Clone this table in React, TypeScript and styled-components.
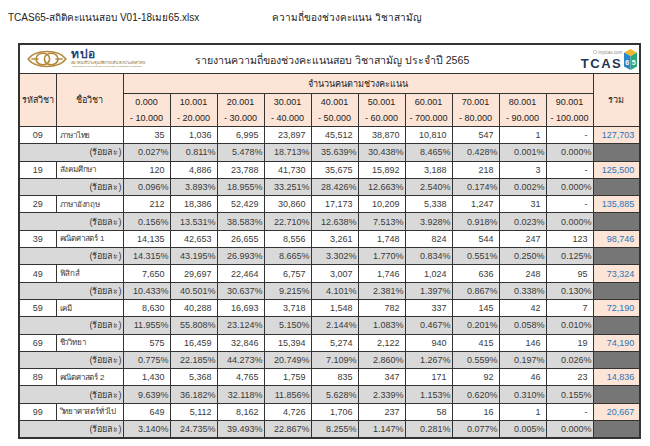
import React from "react";
import styled, { createGlobalStyle } from "styled-components";

type Subject = {
  code: string;
  name: string;
  counts: string[];
  total: string;
  pct: string[];
};

const ranges = [
  ["0.000", "- 10.000"],
  ["10.001", "- 20.000"],
  ["20.001", "- 30.000"],
  ["30.001", "- 40.000"],
  ["40.001", "- 50.000"],
  ["50.001", "- 60.000"],
  ["60.001", "- 700.000"],
  ["70.001", "- 80.000"],
  ["80.001", "- 90.000"],
  ["90.001", "- 100.000"],
];

const subjects: Subject[] = [
  {
    code: "09",
    name: "ภาษาไทย",
    counts: ["35", "1,036", "6,995", "23,897", "45,512", "38,870", "10,810", "547", "1", "-"],
    total: "127,703",
    pct: ["0.027%", "0.811%", "5.478%", "18.713%", "35.639%", "30.438%", "8.465%", "0.428%", "0.001%", "0.000%"],
  },
  {
    code: "19",
    name: "สังคมศึกษา",
    counts: ["120", "4,886", "23,788", "41,730", "35,675", "15,892", "3,188", "218", "3", "-"],
    total: "125,500",
    pct: ["0.096%", "3.893%", "18.955%", "33.251%", "28.426%", "12.663%", "2.540%", "0.174%", "0.002%", "0.000%"],
  },
  {
    code: "29",
    name: "ภาษาอังกฤษ",
    counts: ["212", "18,386", "52,429", "30,860", "17,173", "10,209", "5,338", "1,247", "31", "-"],
    total: "135,885",
    pct: ["0.156%", "13.531%", "38.583%", "22.710%", "12.638%", "7.513%", "3.928%", "0.918%", "0.023%", "0.000%"],
  },
  {
    code: "39",
    name: "คณิตศาสตร์ 1",
    counts: ["14,135", "42,653", "26,655", "8,556", "3,261", "1,748", "824", "544", "247", "123"],
    total: "98,746",
    pct: ["14.315%", "43.195%", "26.993%", "8.665%", "3.302%", "1.770%", "0.834%", "0.551%", "0.250%", "0.125%"],
  },
  {
    code: "49",
    name: "ฟิสิกส์",
    counts: ["7,650", "29,697", "22,464", "6,757", "3,007", "1,746", "1,024", "636", "248", "95"],
    total: "73,324",
    pct: ["10.433%", "40.501%", "30.637%", "9.215%", "4.101%", "2.381%", "1.397%", "0.867%", "0.338%", "0.130%"],
  },
  {
    code: "59",
    name: "เคมี",
    counts: ["8,630", "40,288", "16,693", "3,718", "1,548", "782", "337", "145", "42", "7"],
    total: "72,190",
    pct: ["11.955%", "55.808%", "23.124%", "5.150%", "2.144%", "1.083%", "0.467%", "0.201%", "0.058%", "0.010%"],
  },
  {
    code: "69",
    name: "ชีววิทยา",
    counts: ["575", "16,459", "32,846", "15,394", "5,274", "2,122", "940", "415", "146", "19"],
    total: "74,190",
    pct: ["0.775%", "22.185%", "44.273%", "20.749%", "7.109%", "2.860%", "1.267%", "0.559%", "0.197%", "0.026%"],
  },
  {
    code: "89",
    name: "คณิตศาสตร์ 2",
    counts: ["1,430", "5,368", "4,765", "1,759", "835", "347", "171", "92", "46", "23"],
    total: "14,836",
    pct: ["9.639%", "36.182%", "32.118%", "11.856%", "5.628%", "2.339%", "1.153%", "0.620%", "0.310%", "0.155%"],
  },
  {
    code: "99",
    name: "วิทยาศาสตร์ทั่วไป",
    counts: ["649", "5,112", "8,162", "4,726", "1,706", "237", "58", "16", "1", "-"],
    total: "20,667",
    pct: ["3.140%", "24.735%", "39.493%", "22.867%", "8.255%", "1.147%", "0.281%", "0.077%", "0.005%", "0.000%"],
  },
];

const GlobalStyle = createGlobalStyle`
  body {
    margin: 0;
    background: #fff;
    font-family: "Liberation Sans", "Noto Sans", sans-serif;
    color: #333;
  }
`;

const Page = styled.div`
  width: 650px;
  height: 446px;
  overflow: hidden;
  padding-top: 12px;
  box-sizing: border-box;
`;

const TopBar = styled.div`
  display: grid;
  grid-template-columns: 264px 1fr;
  padding-left: 8px;
  font-size: 10px;
  line-height: 12px;
  color: #222;
`;

const Sheet = styled.table`
  margin: 19px 0 0 18px;
  width: 621px;
  border-collapse: collapse;
  table-layout: fixed;
  border: 2px solid #333;
  font-size: 9px;

  td,
  th {
    border: 1px solid #333;
    padding: 0;
    white-space: nowrap;
    overflow: hidden;
  }
`;

const TitleCell = styled.td`
  height: 28px;
  background: #fff;
`;

const TitleBar = styled.div`
  display: grid;
  grid-template-columns: 1fr auto 1fr;
  align-items: center;
  padding: 0 2px 0 7px;
`;

const Title = styled.div`
  font-size: 10.6px;
  color: #2a2a2a;
  padding-top: 2px;
`;

const Cupt = styled.div`
  display: flex;
  align-items: flex-start;
  gap: 4px;
`;

const CuptText = styled.div`
  display: flex;
  flex-direction: column;
  line-height: 1;
`;

const CuptMark = styled.span`
  font-size: 12px;
  font-weight: 700;
  color: #1d3f7a;
  letter-spacing: 0.5px;
`;

const CuptThai = styled.span`
  font-size: 4px;
  color: #8a6a2c;
  margin-top: 1px;
`;

const CuptEng = styled.span`
  font-size: 2.5px;
  color: #8a6a2c;
  margin-top: 1px;
`;

const Tcas = styled.div`
  justify-self: end;
  display: flex;
  align-items: flex-end;
  gap: 2px;
`;

const TcasText = styled.div`
  display: flex;
  flex-direction: column;
  align-items: flex-end;
  line-height: 1;
`;

const TcasSite = styled.span`
  font-size: 4.5px;
  color: #8a8a8a;
  margin-bottom: 1px;
`;

const TcasWord = styled.span`
  font-size: 13px;
  font-weight: 700;
  color: #1f3556;
  letter-spacing: 1.5px;
`;

const HeadCell = styled.th`
  background: #fce4d6;
  font-weight: 400;
  color: #222;
  text-align: center;
  vertical-align: middle;
`;

const GroupHead = styled(HeadCell)`
  height: 19px;
`;

const RangeHead = styled(HeadCell)`
  height: 31px;
  line-height: 16px;
`;

const DataRow = styled.tr<{ $pct?: boolean }>`
  height: 17.3px;
  background: ${(p) => (p.$pct ? "#d9d9d9" : "#fff")};
  color: #3a3a3a;
`;

const CodeCell = styled.td`
  text-align: center;
`;

const NameCell = styled.td`
  text-align: left;
  padding-left: 3px !important;
  font-size: 8px;
  letter-spacing: -0.2px;
`;

const NumCell = styled.td<{ $pct?: boolean }>`
  text-align: right;
  padding-right: ${(p) => (p.$pct ? "1px" : "5px")} !important;
`;

const TotalCell = styled.td<{ $pct?: boolean }>`
  text-align: right;
  padding-right: 5px !important;
  background: ${(p) => (p.$pct ? "#767676" : "#fce4d6")};
  color: #2e75b6;
`;

const Emblem = () => (
  <svg width="40" height="22" viewBox="0 0 38 21">
    <g fill="none" stroke="#b68a3e" strokeWidth="1.6">
      <path d="M1 10.5 C8 1 30 1 37 10.5 C30 20 8 20 1 10.5 Z" />
      <ellipse cx="15" cy="10.5" rx="6.5" ry="5.5" />
      <ellipse cx="23" cy="10.5" rx="6.5" ry="5.5" />
      <path d="M4 10.5 H11 M27 10.5 H34" />
    </g>
  </svg>
);

const Cube = () => (
  <svg width="13" height="21" viewBox="0 0 13 21">
    <polygon points="6.5,0 13,3.5 6.5,7 0,3.5" fill="#f2b632" />
    <polygon points="0,3.5 6.5,7 6.5,21 0,17.5" fill="#2a86c8" />
    <polygon points="6.5,7 13,3.5 13,17.5 6.5,21" fill="#2fa67a" />
    <text x="3.2" y="15.5" fontSize="7" fontWeight="700" fill="#fff" textAnchor="middle" fontFamily="Liberation Sans, sans-serif">
      6
    </text>
    <text x="9.8" y="15.5" fontSize="7" fontWeight="700" fill="#fff" textAnchor="middle" fontFamily="Liberation Sans, sans-serif">
      5
    </text>
  </svg>
);

const Globe = () => (
  <svg width="4" height="4" viewBox="0 0 4 4" style={{ marginRight: 1 }}>
    <circle cx="2" cy="2" r="1.7" fill="none" stroke="#999" strokeWidth="0.5" />
  </svg>
);

export default function App() {
  return (
    <Page>
      <GlobalStyle />
      <TopBar>
        <span>TCAS65-สถิติคะแนนสอบ V01-18เมย65.xlsx</span>
        <span>ความถี่ของช่วงคะแนน วิชาสามัญ</span>
      </TopBar>
      <Sheet>
        <colgroup>
          <col style={{ width: 37 }} />
          <col style={{ width: 67 }} />
          {ranges.map((_, i) => (
            <col key={i} style={{ width: 47 }} />
          ))}
          <col style={{ width: 47 }} />
        </colgroup>
        <thead>
          <tr>
            <TitleCell colSpan={13}>
              <TitleBar>
                <Cupt>
                  <Emblem />
                  <CuptText>
                    <CuptMark>ทปอ</CuptMark>
                    <CuptThai>สมาคมที่ประชุมอธิการบดีแห่งประเทศไทย</CuptThai>
                    <CuptEng>Association of The Councils of University Presidents of Thailand</CuptEng>
                  </CuptText>
                </Cupt>
                <Title>รายงานความถี่ของช่วงคะแนนสอบ วิชาสามัญ ประจำปี 2565</Title>
                <Tcas>
                  <TcasText>
                    <TcasSite>
                      <Globe />
                      mytcas.com
                    </TcasSite>
                    <TcasWord>TCAS</TcasWord>
                  </TcasText>
                  <Cube />
                </Tcas>
              </TitleBar>
            </TitleCell>
          </tr>
          <tr>
            <HeadCell rowSpan={2}>รหัสวิชา</HeadCell>
            <HeadCell rowSpan={2}>ชื่อวิชา</HeadCell>
            <GroupHead colSpan={10}>จำนวนคนตามช่วงคะแนน</GroupHead>
            <HeadCell rowSpan={2}>รวม</HeadCell>
          </tr>
          <tr>
            {ranges.map(([from, to]) => (
              <RangeHead key={from}>
                {from}
                <br />
                {to}
              </RangeHead>
            ))}
          </tr>
        </thead>
        <tbody>
          {subjects.map((s) => (
            <React.Fragment key={s.code}>
              <DataRow>
                <CodeCell>{s.code}</CodeCell>
                <NameCell>{s.name}</NameCell>
                {s.counts.map((c, i) => (
                  <NumCell key={i}>{c}</NumCell>
                ))}
                <TotalCell>{s.total}</TotalCell>
              </DataRow>
              <DataRow $pct>
                <NumCell colSpan={2} $pct>
                  (ร้อยละ)
                </NumCell>
                {s.pct.map((p, i) => (
                  <NumCell key={i} $pct>
                    {p}
                  </NumCell>
                ))}
                <TotalCell $pct />
              </DataRow>
            </React.Fragment>
          ))}
        </tbody>
      </Sheet>
    </Page>
  );
}
